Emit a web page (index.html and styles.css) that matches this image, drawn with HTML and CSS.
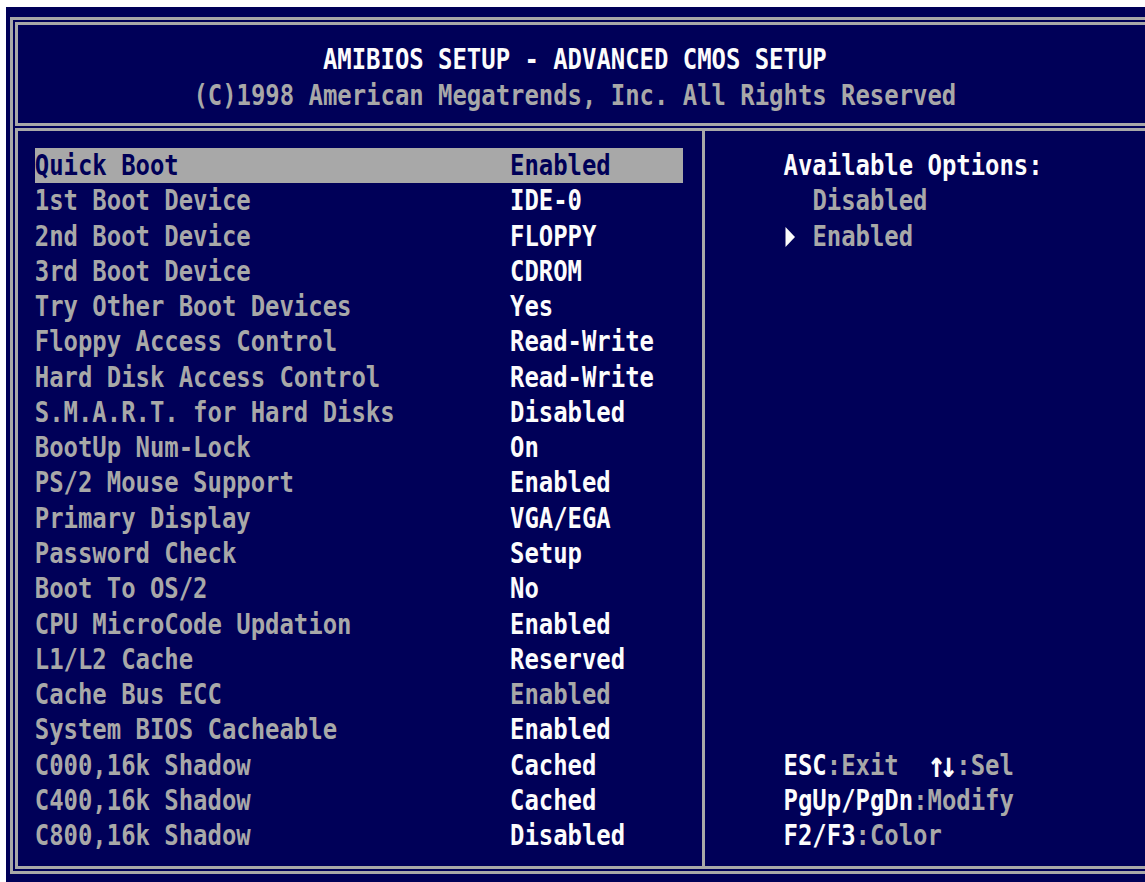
FILE: index.html
```html
<!DOCTYPE html>
<html lang="en">
<head>
<meta charset="utf-8">
<title>AMIBIOS Setup - Advanced CMOS Setup</title>
<link rel="stylesheet" href="styles.css">
</head>
<body>
<div class="screen">
  <div class="frame">
    <header class="head">
      <div class="line hi"><span class="t">AMIBIOS SETUP - ADVANCED CMOS SETUP</span></div>
      <div class="line"><span class="t">(C)1998 American Megatrends, Inc. All Rights Reserved</span></div>
    </header>
    <main class="panel">
      <ul class="settings">
        <li class="row sel"><span class="label t">Quick Boot</span><span class="value t">Enabled</span></li>
        <li class="row"><span class="label t">1st Boot Device</span><span class="value t">IDE-0</span></li>
        <li class="row"><span class="label t">2nd Boot Device</span><span class="value t">FLOPPY</span></li>
        <li class="row"><span class="label t">3rd Boot Device</span><span class="value t">CDROM</span></li>
        <li class="row"><span class="label t">Try Other Boot Devices</span><span class="value t">Yes</span></li>
        <li class="row"><span class="label t">Floppy Access Control</span><span class="value t">Read-Write</span></li>
        <li class="row"><span class="label t">Hard Disk Access Control</span><span class="value t">Read-Write</span></li>
        <li class="row"><span class="label t">S.M.A.R.T. for Hard Disks</span><span class="value t">Disabled</span></li>
        <li class="row"><span class="label t">BootUp Num-Lock</span><span class="value t">On</span></li>
        <li class="row"><span class="label t">PS/2 Mouse Support</span><span class="value t">Enabled</span></li>
        <li class="row"><span class="label t">Primary Display</span><span class="value t">VGA/EGA</span></li>
        <li class="row"><span class="label t">Password Check</span><span class="value t">Setup</span></li>
        <li class="row"><span class="label t">Boot To OS/2</span><span class="value t">No</span></li>
        <li class="row"><span class="label t">CPU MicroCode Updation</span><span class="value t">Enabled</span></li>
        <li class="row"><span class="label t">L1/L2 Cache</span><span class="value t">Reserved</span></li>
        <li class="row"><span class="label t">Cache Bus ECC</span><span class="value dim t">Enabled</span></li>
        <li class="row"><span class="label t">System BIOS Cacheable</span><span class="value t">Enabled</span></li>
        <li class="row"><span class="label t">C000,16k Shadow</span><span class="value t">Cached</span></li>
        <li class="row"><span class="label t">C400,16k Shadow</span><span class="value t">Cached</span></li>
        <li class="row"><span class="label t">C800,16k Shadow</span><span class="value t">Disabled</span></li>
      </ul>
      <aside class="help">
        <div class="opts">
          <div class="line hi"><span class="t">Available Options:</span></div>
          <div class="line opt"><span class="t">Disabled</span></div>
          <div class="line"><svg class="ptr" viewBox="0 0 28.8 35.28" width="28.8" height="35.28" aria-hidden="true"><polygon points="1.5,8 11,18 1.5,28" fill="#fcfcfc"/></svg><span class="t">Enabled</span></div>
        </div>
        <div class="keys">
          <div class="line"><span class="t"><b>ESC</b>:Exit  <b class="arrows">↑↓</b>:Sel</span></div>
          <div class="line"><span class="t"><b>PgUp/PgDn</b>:Modify</span></div>
          <div class="line"><span class="t"><b>F2/F3</b>:Color</span></div>
        </div>
      </aside>
    </main>
  </div>
</div>
</body>
</html>
```
FILE: styles.css
```css
html, body {
  margin: 0;
  padding: 0;
  overflow: hidden;
  background: #ffffff;
}

body {
  padding: 7px 0 0 6px;
}

/* 80x25 text-mode screen: 14.4px cells, 35.28px rows */
.screen {
  box-sizing: border-box;
  width: 1152px;
  height: 882px;
  padding: 10px 0 0 4px;
  background: #000058;
  color: #a8a8a8;
  font-family: "DejaVu Sans Mono", monospace;
  font-size: 23.92px;
  font-weight: bold;
  line-height: 35.28px;
}

/* text glyphs are taller than the font's natural shape */
.t {
  display: inline-block;
  white-space: pre;
  transform: translateY(2px) scaleY(1.2);
  transform-origin: 0 26px;
}

.hi { color: #fcfcfc; }

/* double-line frame: outer rule, gap, then each box's own rule */
.frame {
  box-sizing: border-box;
  width: 1144px;
  border: 3px solid #a8a8a8;
  padding: 2px;
}

.head {
  border: 3px solid #a8a8a8;
  padding: 17.28px 14.4px 10.16px 0;
  text-align: center;
}

.line {
  height: 35.28px;
}

.panel {
  display: flex;
  margin-top: 2px;
  border: 3px solid #a8a8a8;
  padding-left: 16.8px;
}

.settings {
  list-style: none;
  margin: 0;
  padding: 17.12px 0 12.28px 0;
  width: 648px;
}

.row {
  display: flex;
  height: 35.28px;
}

.label {
  width: 475.2px;
}

.value { color: #fcfcfc; }
.value.dim { color: #a8a8a8; }

.row.sel {
  background: #a8a8a8;
  color: #000058;
}

.row.sel .value { color: #000058; }

.help {
  display: flex;
  flex-direction: column;
  justify-content: space-between;
  flex: 1;
  margin-left: 19.2px;
  border-left: 3px solid #a8a8a8;
  padding: 17.12px 0 12.28px 78.6px;
}

.opt {
  padding-left: 28.8px;
}

.ptr {
  display: inline-block;
  vertical-align: top;
}

.keys b {
  font-weight: inherit;
  color: #fcfcfc;
}

/* the two arrow glyphs fill two cells and stand as tall as capitals */
.keys .arrows {
  display: inline-block;
  width: 28.8px;
  font-size: 30px;
  letter-spacing: -6px;
  text-align: left;
  vertical-align: top;
  line-height: 33px;
  overflow: visible;
}
```
